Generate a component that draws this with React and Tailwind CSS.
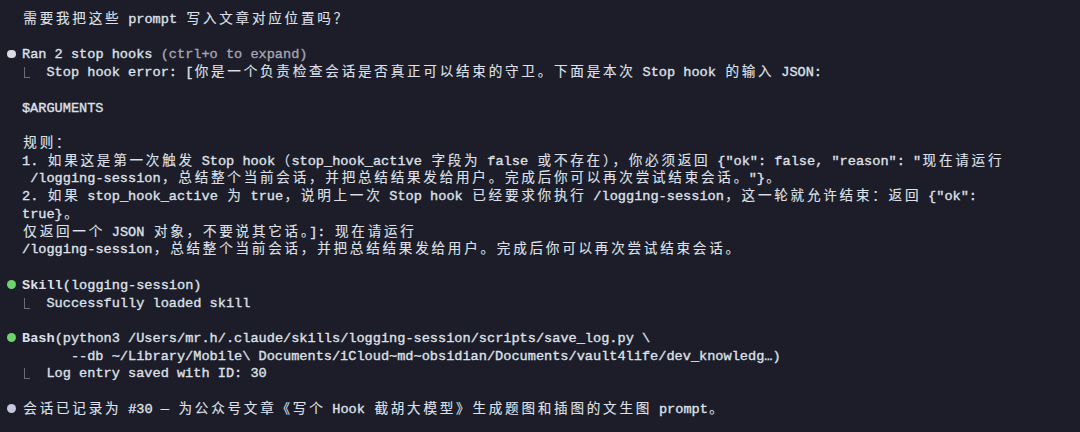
import React from "react";

// Terminal transcript, monospace grid: 1 cell = 8.17px, CJK = 2 cells.
const WIDE = /([\u1100-\u115F\u2E80-\uA4CF\uAC00-\uD7A3\uF900-\uFAFF\uFE30-\uFE4F\uFF00-\uFF60\uFFE0-\uFFE6\u3000-\u303F]+)/;

function T({ text }) {
  const parts = text.split(WIDE);
  return parts.map((p, i) =>
    i % 2 === 1 ? (
      <span key={i} className="pl-[1.37px] mr-[-1.37px] tracking-[2.74px] [-webkit-text-stroke:0.12px]">
        {p}
      </span>
    ) : (
      <React.Fragment key={i}>{p}</React.Fragment>
    )
  );
}

function Line({ children }) {
  return <div className="h-[17.73px] whitespace-pre">{children}</div>;
}

function Dot({ color }) {
  return <span className={`inline-block w-[8.5px] h-[8.5px] rounded-full ml-[1.4px] mr-[-1.73px] ${color}`} />;
}

function Elbow() {
  return (
    <span className="inline-block w-[6px] h-[11px] ml-[1.6px] mr-[0.57px] border-l border-b border-[#6a6c78] align-[-2px]" />
  );
}

export default function App() {
  return (
    <div
      className="w-[1080px] h-[432px] overflow-hidden bg-[#1c1d28] text-[#dfe0e9] text-[13.6px] leading-[17.73px] [-webkit-text-stroke:0.35px] pl-[5.65px] pt-[11px]"
      style={{ fontFamily: '"Liberation Mono", "Noto Sans CJK SC", monospace' }}
    >
      <Line>
        {"  "}
        <T text="需要我把这些 prompt 写入文章对应位置吗？" />
      </Line>
      <Line> </Line>
      <Line>
        <Dot color="bg-[#d9dae2]" />
        {" Ran 2 stop hooks "}
        <span className="text-[#a4a6b2]">(ctrl+o to expand)</span>
      </Line>
      <Line>
        {"  "}
        <Elbow />
        {"  "}
        <T text="Stop hook error: [你是一个负责检查会话是否真正可以结束的守卫。下面是本次 Stop hook 的输入 JSON:" />
      </Line>
      <Line> </Line>
      <Line>{"  $ARGUMENTS"}</Line>
      <Line> </Line>
      <Line>
        {"  "}
        <T text="规则：" />
      </Line>
      <Line>
        {"  "}
        <T text={'1. 如果这是第一次触发 Stop hook（stop_hook_active 字段为 false 或不存在），你必须返回 {"ok": false, "reason": "现在请运行'} />
      </Line>
      <Line>
        {"   "}
        <T text={'/logging-session，总结整个当前会话，并把总结结果发给用户。完成后你可以再次尝试结束会话。"}。'} />
      </Line>
      <Line>
        {"  "}
        <T text={'2. 如果 stop_hook_active 为 true，说明上一次 Stop hook 已经要求你执行 /logging-session，这一轮就允许结束：返回 {"ok":'} />
      </Line>
      <Line>
        {"  "}
        <T text="true}。" />
      </Line>
      <Line>
        {"  "}
        <T text="仅返回一个 JSON 对象，不要说其它话。]: 现在请运行" />
      </Line>
      <Line>
        {"  "}
        <T text="/logging-session，总结整个当前会话，并把总结结果发给用户。完成后你可以再次尝试结束会话。" />
      </Line>
      <Line> </Line>
      <Line>
        <Dot color="bg-[#6bd46c]" />
        {" "}
        <span className="font-bold [-webkit-text-stroke:0px]">Skill</span>
        {"(logging-session)"}
      </Line>
      <Line>
        {"  "}
        <Elbow />
        {"  Successfully loaded skill"}
      </Line>
      <Line> </Line>
      <Line>
        <Dot color="bg-[#6bd46c]" />
        {" "}
        <span className="font-bold [-webkit-text-stroke:0px]">Bash</span>
        {"(python3 /Users/mr.h/.claude/skills/logging-session/scripts/save_log.py \\"}
      </Line>
      <Line>{"        --db ~/Library/Mobile\\ Documents/iCloud~md~obsidian/Documents/vault4life/dev_knowledg…)"}</Line>
      <Line>
        {"  "}
        <Elbow />
        {"  Log entry saved with ID: 30"}
      </Line>
      <Line> </Line>
      <Line>
        <Dot color="bg-[#c6c9dc]" />
        {" "}
        <T text="会话已记录为 #30 — 为公众号文章《写个 Hook 截胡大模型》生成题图和插图的文生图 prompt。" />
      </Line>
    </div>
  );
}
